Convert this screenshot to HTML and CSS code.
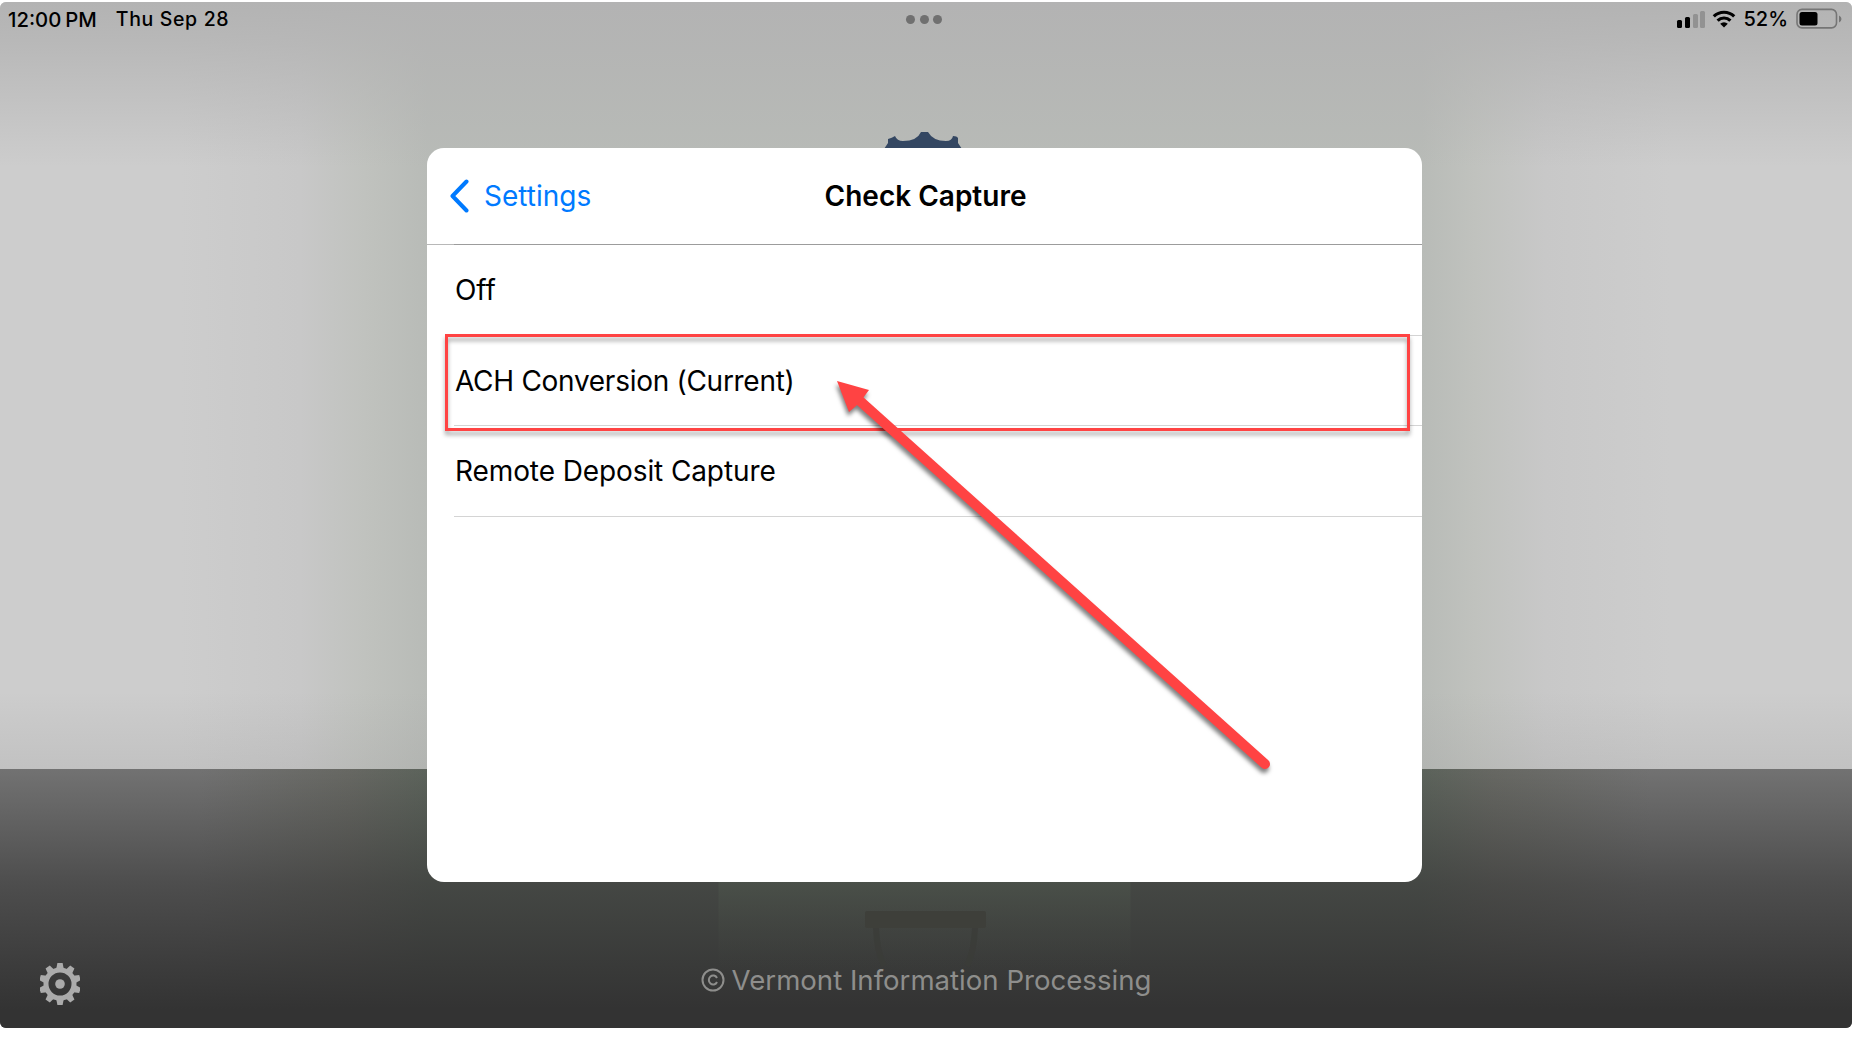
FILE: index.html
```html
<!DOCTYPE html>
<html lang="en">
<head>
  <meta charset="UTF-8">
  <title>Check Capture</title>
  <link rel="stylesheet" href="styles.css">
</head>
<body>

  <div class="screen">
    <!-- blurred backdrop -->
    <div class="backdrop">
      <div class="wall"></div>
      <div class="floor"></div>
      <svg class="scenery" width="1852" height="1026" viewBox="0 2 1852 1026">
        <defs>
          <linearGradient id="panel" x1="0" y1="0" x2="0" y2="1">
            <stop offset="0" stop-color="#4a5049"/>
            <stop offset="1" stop-color="#3e403d" stop-opacity="0"/>
          </linearGradient>
        </defs>
        <rect x="718.5" y="880" width="412" height="90" fill="url(#panel)"/>
        <rect x="865" y="911" width="121" height="17" rx="2" fill="#3e3f3a"/>
        <path d="M876 928q1 24 8 38M975 928q-1 24-8 38" fill="none" stroke="#3b3c38" stroke-width="6" opacity=".8"/>
        <path d="M884 149l4-6v-4q4-1 7-3q2 5 8 5q14 0 18-9h7q5 9 18 9q6 0 7-5q4 0 5 2v5l4 6z" fill="#344762"/>
      </svg>
    </div>

    <header class="status-bar">
      <div class="status-left">
        <span class="time">12:00<i></i>PM</span>
        <span class="date">Thu Sep 28</span>
      </div>
      <div class="dots"><b></b><b></b><b></b></div>
      <div class="status-right">
        <svg class="signal" width="30" height="18" viewBox="0 0 30 18">
          <rect x="1" y="10" width="5" height="8" rx="1.5"/>
          <rect x="9" y="7" width="5" height="11" rx="1.5"/>
          <rect x="17" y="4" width="5" height="14" rx="1.5" fill="#929292"/>
          <rect x="24" y="1" width="5" height="17" rx="1.5" fill="#929292"/>
        </svg>
        <svg class="wifi" width="24" height="18" viewBox="0 0 24 18">
          <path d="M1.800 6.400a14.600 14.600 0 0 1 20.400 0M5.600 10.600a9.200 9.200 0 0 1 12.800 0" fill="none" stroke="#000" stroke-width="3.200"/>
          <path d="M8.200 13.700a5.400 5.400 0 0 1 7.600 0L12 17.600z"/>
        </svg>
        <span class="percent">52%</span>
        <svg class="battery" width="46" height="22" viewBox="0 0 46 22">
          <rect x="1" y="1.400" width="39.500" height="18.500" rx="5" fill="none" stroke="#757575" stroke-width="1.600"/>
          <rect x="3.500" y="4" width="18" height="13.500" rx="2.500"/>
          <path d="M43 7.500q2.500 1 2.500 3.500t-2.500 3.500z" fill="#757575"/>
        </svg>
      </div>
    </header>

    <main class="modal">
      <div class="nav">
        <a class="back">
          <svg width="22" height="34" viewBox="0 0 22 34">
            <path d="M17.500 2.500L3.500 17l14 14.500" fill="none" stroke="#007aff" stroke-width="4" stroke-linecap="round" stroke-linejoin="round"/>
          </svg>
          <span>Settings</span>
        </a>
        <h1>Check Capture</h1>
      </div>
      <ul class="options">
        <li>Off</li>
        <li class="current">ACH Conversion (Current)</li>
        <li>Remote Deposit Capture</li>
      </ul>
    </main>

    <footer class="footer">
      <svg class="gear" width="40" height="42" viewBox="-20 -21 40 42">
        <g fill="#ababab">
          <path id="tooth" d="M-3.800-15l1.200-6h5.200l1.200 6z"/>
          <use href="#tooth" transform="rotate(36)"/>
          <use href="#tooth" transform="rotate(72)"/>
          <use href="#tooth" transform="rotate(108)"/>
          <use href="#tooth" transform="rotate(144)"/>
          <use href="#tooth" transform="rotate(180)"/>
          <use href="#tooth" transform="rotate(216)"/>
          <use href="#tooth" transform="rotate(252)"/>
          <use href="#tooth" transform="rotate(288)"/>
          <use href="#tooth" transform="rotate(324)"/>
          <circle r="4.800"/>
        </g>
        <circle r="14" fill="none" stroke="#ababab" stroke-width="5"/>
      </svg>
      <p class="copyright">
        <svg width="24" height="24" viewBox="0 0 24 24" fill="none" stroke="#8e8e8c" stroke-width="2">
          <circle cx="12" cy="12" r="10.500"/>
          <path d="M16 10a4.300 4.600 0 1 0 0 4"/>
        </svg>
        <span>Vermont Information Processing</span>
      </p>
    </footer>

    <!-- callout drawn over the modal -->
    <div class="highlight"></div>
    <svg class="arrow" width="460" height="420" viewBox="830 370 460 420">
      <path d="M860 401L1265 764" stroke="#ff4343" stroke-width="10" stroke-linecap="round"/>
      <path d="M837 381l32 9-6 8-7 8-7 6z" fill="#ff4343"/>
    </svg>
  </div>

</body>
</html>
```

FILE: styles.css
```css
body {
  margin: 0;
  padding-top: 2px;
  height: 1055px;
  overflow: hidden;
  background: #fff;
  font-family: Inter, "Liberation Sans", sans-serif;
  color: #000;
}
.screen {
  position: relative;
  display: flex;
  flex-direction: column;
  width: 1852px;
  height: 1026px;
  border-radius: 6px;
  overflow: hidden;
}

/* backdrop */
.backdrop {
  position: absolute;
  inset: 0;
  display: flex;
  flex-direction: column;
}
.wall {
  height: 767px;
  background:
    linear-gradient(#b3b3b3 0, rgba(179, 179, 179, 0.8) 40px, rgba(179, 179, 179, 0) 165px),
    linear-gradient(rgba(160, 160, 160, 0) 690px, rgba(160, 160, 160, 0.25) 767px),
    linear-gradient(90deg, #cdcdcd 180px, #c8c8c8 300px, #c0c2be 365px, #b8bbb7 427px, #b8bbb7 1422px, #c0c2be 1475px, #c8c8c8 1545px, #cdcdcd 1670px);
}
.floor {
  flex: 1;
  background:
    linear-gradient(rgba(51, 51, 51, 0), rgba(51, 51, 51, 0.58) 115px, #333 240px),
    linear-gradient(90deg, #727272 200px, #676863 350px, #5c635b 427px, #5c635b 1422px, #676863 1495px, #727272 1650px);
}
.scenery {
  position: absolute;
  top: 0;
  left: 0;
}

/* status bar */
.status-bar {
  position: relative;
  display: grid;
  grid-template-columns: 1fr 40px 1fr;
  align-items: center;
  height: 34px;
  padding: 0 10px 0 8px;
  font-size: 19.5px;
  font-weight: 500;
  white-space: nowrap;
}
.status-left {
  display: flex;
  gap: 19px;
}
.time {
  font-size: 20.3px;
}
.time i {
  display: inline-block;
  width: 4px;
}
.date {
  letter-spacing: 0.65px;
}
.dots {
  display: flex;
  justify-content: space-between;
  padding: 0 3px 0 1px;
}
.dots b {
  width: 9px;
  height: 9px;
  border-radius: 50%;
  background: #707070;
}
.status-right {
  display: flex;
  justify-content: flex-end;
  align-items: center;
}
.wifi {
  margin: 0 7px 0 6px;
}
.percent {
  font-size: 20px;
}
.battery {
  margin-left: 8px;
}

/* modal */
.modal {
  position: relative;
  width: 995px;
  height: 734px;
  margin: 112px 0 0 427px;
  border-radius: 17px;
  background: #fff;
  font-size: 28px;
}
.nav {
  display: grid;
  grid-template-columns: 1fr auto 1fr;
  align-items: center;
  box-sizing: border-box;
  height: 97px;
  padding: 0 20px 0 22px;
  border-bottom: 1px solid #b8b8b8;
}
.back {
  display: flex;
  align-items: center;
  gap: 13px;
  color: #007aff;
}
.nav h1 {
  margin: 0;
  font-size: 28px;
  font-weight: 600;
}
.options {
  margin: -1px 0 0 27px;
  padding: 0;
  list-style: none;
  border-top: 1px solid #9c9c9c;
}
.options li {
  display: flex;
  align-items: center;
  box-sizing: border-box;
  height: 90.700px;
  padding-left: 1px;
  border-bottom: 1px solid #d4d4d4;
  letter-spacing: -0.1px;
}
.options .current {
  letter-spacing: -0.28px;
}

/* footer */
.footer {
  position: relative;
  display: grid;
  grid-template-columns: 1fr auto 1fr;
  align-items: center;
  flex: 1;
  padding: 0 40px;
}
.gear {
  margin-top: 57px;
}
.copyright {
  display: flex;
  align-items: center;
  gap: 7px;
  margin: 50px 0 0;
  font-size: 27.600px;
  color: #8e8e8c;
}

/* callout */
.highlight {
  position: absolute;
  left: 445px;
  top: 332px;
  box-sizing: border-box;
  width: 965px;
  height: 97px;
  border: 3px solid #ff4343;
  filter: drop-shadow(0 4px 2px rgba(0, 0, 0, 0.35));
}
.arrow {
  position: absolute;
  left: 830px;
  top: 368px;
  filter: drop-shadow(-1px 4px 2px rgba(0, 0, 0, 0.5));
}
```
